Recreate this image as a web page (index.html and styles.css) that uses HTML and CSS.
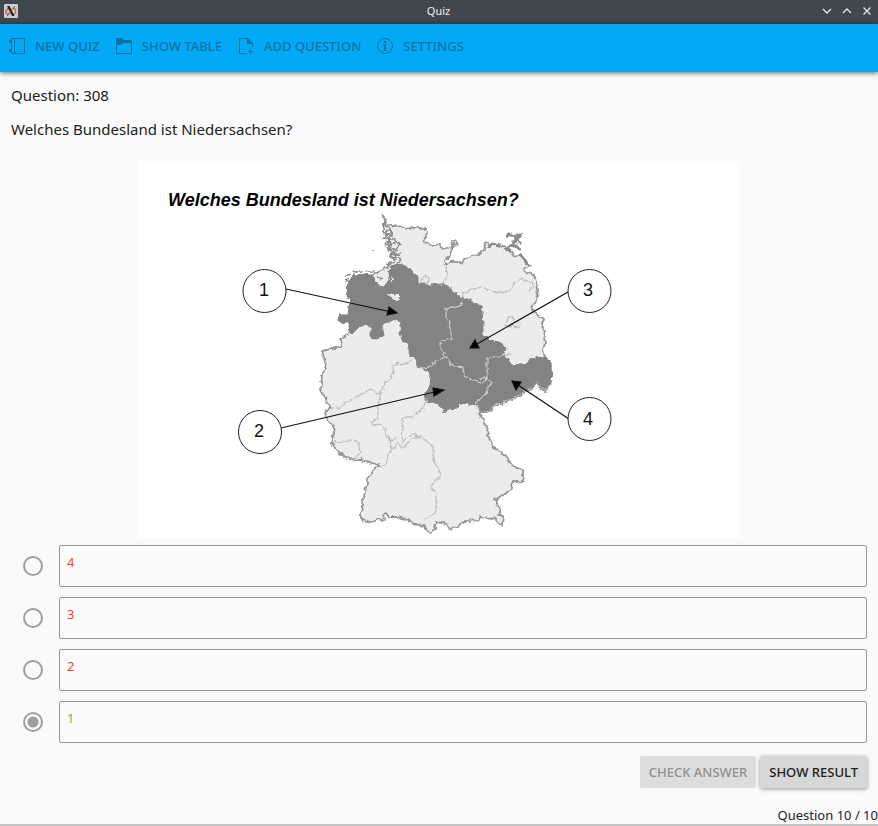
FILE: index.html
```html
<!DOCTYPE html>
<html lang="en">
<head>
<meta charset="utf-8">
<title>Quiz</title>
<link rel="stylesheet" href="styles.css">
</head>
<body>
<header class="titlebar">
  <svg class="app-icon" viewBox="0 0 14 14" aria-hidden="true">
    <rect width="14" height="14" rx="1" fill="#c5cdd0"/>
    <path d="M5 4C1 6 1 11 5 10M9 4q4 1 2 5l-2 2" fill="none" stroke="#e9642d" stroke-width="1.5"/>
    <path d="M3 2h2.500l5 10H8z" fill="#222"/>
    <path d="M11 2L3 12" stroke="#444" stroke-width=".8"/>
  </svg>
  <h1 class="window-title">Quiz</h1>
  <div class="window-controls">
    <button type="button" aria-label="Minimize"><svg viewBox="0 0 10 10"><path d="M1 3l4 4 4-4"/></svg></button>
    <button type="button" aria-label="Maximize"><svg viewBox="0 0 10 10"><path d="M1 7l4-4 4 4"/></svg></button>
    <button type="button" aria-label="Close"><svg viewBox="0 0 10 10"><path d="M1.500 1.500l7 7M8.500 1.500l-7 7"/></svg></button>
  </div>
</header>
<nav class="toolbar">
  <button type="button" class="tool"><svg viewBox="0 0 16 16"><path d="M2.500 .5h13v15h-13zM5.500 .5v15"/><path class="solid" d="M0 2h2v3H0zM0 11h2v3H0z"/></svg>New Quiz</button>
  <button type="button" class="tool"><svg viewBox="0 0 16 16"><path d="M.5 .5v15h15v-13"/><path class="solid" d="M0 0h6l2 2h8v3H7L5 7H0z"/></svg>Show Table</button>
  <button type="button" class="tool"><svg viewBox="0 0 16 16"><path d="M14.500 9V5L10 .5H1.500v15H9M12.500 11v5M10 13.500h5"/><path class="solid" d="M9 0l6 6H9z"/></svg>Add Question</button>
  <button type="button" class="tool"><svg viewBox="0 0 16 16"><circle cx="8" cy="8" r="7.500"/><path class="solid" d="M7 3h2v2H7zM6 6h3v6h1v1H6v-1h1V7H6z"/></svg>Settings</button>
</nav>
<main class="content">
  <p class="line">Question: 308</p>
  <p class="line">Welches Bundesland ist Niedersachsen?</p>
  <svg class="map" viewBox="137 161 602 377" role="img" aria-label="Welches Bundesland ist Niedersachsen?">
    <filter id="rugged" color-interpolation-filters="sRGB">
      <feTurbulence type="fractalNoise" baseFrequency=".22" numOctaves="2" seed="4"/>
      <feDisplacementMap in="SourceGraphic" scale="5" xChannelSelector="R" yChannelSelector="G"/>
    </filter>
    <rect x="137" y="161" width="602" height="377" fill="#fff"/>
    <text class="map-title" x="167" y="206">Welches Bundesland ist Niedersachsen?</text>
    <g filter="url(#rugged)">
    <path class="country" d="M384 220l-1 3 2 3 5-1 8 1 7 3 9-1 6-1 6 4-1 6-3 5 6 1 3 4 6-3 5 5 7-2 3-3-1-4h3l3 4-5 1-2 2 1 5-3 5-4 3v4l6-2 7-1 4 3 2-5 7-3 7-1 3-3 3-2 1-6 3-1 2 2 8 0 6 1 6 3 3 6 7 1 6 6 3 4-5 3 3 4 7 2 2 7 1 8 1 7-4 7-3 6 5 2 2 4 5 2-1 7 3 5-1 5 1 8-2 7 2 7 4 4 3 8-1 11-4 9-2 2-6-4-2-6-5 8-8 4-8 5-7 2-7 4-8 2-5 5-5 2-4-4v6l4 5 3 7 2 7-2 1 3 5 4 8 7 4 6 6 5 7 6 3 5 3v11l-10-1-3 10-9 5-6 4 3 5 3 6-2 3 4 4-1 7-4-2-3-6-6 2-8-2-2 3-13 1-7 5-9 3-3-5-11-2-1 7-6 4-5-7-10-2-6-4-10-3h-9l-3-4-3 2 1 5-7-1-1 2-10 1-5-4v-6l2-12 3-12 2-10 7-10 4-3-10-3-9-2-11-1-7-4-6-6-4-6 1-9 2-4-3-5-6-8-1-5 6-5-4-5-2-5-5-7 2-6-2-3 4-10 2-6-4-14 9-2 9-2 3-4-3-4 9-6 8-50 30-16 8-8-5-3 2-4-6-5 5-3-3-5 4-4-2-6-5-3 2-5-5-5z"/>
    <path class="state" d="M344 281l6-2 2-4 12-1 8 2 2 6 4 3v2l5 1 3-4 2-4v-10l4-5h12l7 6 6 6v6l12 2 11-1 8 2 4 6 7 5 8 2 6 4 7 3 1 6 1 12v11l8 5 11 3 4 6-3 6 5 4 4 7 15-2 2-5 14-2 6 2 3 8-1 12-4 8-2 2-6-4-2-6-5 8-8 4-8 5-7 2-7 4-8 2-5 5-5 2-7-5-8-2-10-1-2 5-8 1-5 3-2-5-6-4-11-2v-7l5-7 1-13-4-4-8-2-4-10-5-2-2-12-6-4-2-8 1-10-7-2-6 2-4 1-2 5 1 9-8 2-4-2v-9l-5-4-8 4-6 6-5-3 2-9-6 2-5-4 1-5 9 0 2-15-3-5 1-15z"/>
    <path class="city" d="M386 293l6 1 7 1v5l-7 0-2-4-4-1zM377 278l4-1 1 8-4 0zM390 276l2 3-2 4z"/>
    <path class="coast" d="M344 276l6-2m2-2l9-1m4 0l8 0m3 2h2m-2 4l5 2M384 264l5 1 1 3M383 220l-1 12 5 2-4 4 6 1-5 5 7 1-4 4 8 1-4 4 7 0-5 3 7 2-3 5 5 4M385 231h5v4h-5zM388 239h6v5h-6zM391 254v5M395 242l5 2-5 4M371 251h1"/>
    <path class="coast thick" d="M487 248l3-4 9 1m6-7l3-4 5 2 1 5-5 5 7 0 3 4m-15-1l7 2m7 4l5 3 3 6M507 236l12-1-3 5 5 4"/>
    <g class="border">
      <path d="M418 284l3-5 3-4 5 5-4 3 5 3M446 264l-1 6 2 6-4 6-3 4M460 298l3-5 5-3 9-2 4-1 5 3 9 2 14-1 5-9 6-4 6 3 5 1 2 6-5 3"/>
      <path d="M505 325l2-8 5 0 1 4 7 3-2 4-6-2-4 1zM508 327l5-5"/>
      <path class="light" d="M462 300l-1 5-16 3v9l4 5-1 6 3 5-1 6-9 1-2 4 2 7 4 5 5 9 12 3 1 7 5 3 14 5 4-4v-21l24-4M478 379l7-1 6 5-4 4-3 9-7 4-3 7 5 3M445 357l-10 4-7 6-10 2"/>
      <path d="M411 361l-11 4-2-2-6 2-1 5 2 4-9 10-5 8-4 3-4-7-8 5-8 4-10 5-6 5-9 1M380 393l-2 8-1 10 0 7-6 4 1 3 7-1 5 4 1 10 4 3 1 6 3 2 4-6 4 5 7-6 4-4 8-2 7 6 5 4v15l6 7 1 8-5 5-4 5 2 5 3 2v17l-4 6-8 3M334 442h10l4-2 9 1 2 11-3 6M389 440l1 10-3 5-2 10-5 1M426 399l-3 8-10 9-12 2 1 9-1 15 5-4 6-4 7 4M384 434l4 4 3 3 4-3"/>
    </g>
    </g>
    <g class="arrow">
      <path d="M285 289L395 313M280 428L442 390M567 292L469 348M568 419L511 381"/>
      <path class="tip" d="M396 313l-10 2 2-8zM443 390l-10 6-1-8zM469 348l5-8 4 8zM511 381l9 1-5 8z"/>
    </g>
    <g class="marker">
      <circle cx="263.500" cy="291" r="21.500"/><circle cx="259" cy="432" r="21.500"/><circle cx="588.500" cy="291" r="21.500"/><circle cx="588.500" cy="419" r="21.500"/>
      <text x="263" y="296">1</text><text x="258" y="437">2</text><text x="587" y="296">3</text><text x="587" y="425">4</text>
    </g>
  </svg>
  <form class="answers">
    <div class="answer"><input type="radio" name="answer" id="a1" aria-labelledby="t1"><textarea class="wrong" id="t1" rows="1" readonly aria-label="Answer 4">4</textarea></div>
    <div class="answer"><input type="radio" name="answer" id="a2" aria-labelledby="t2"><textarea class="wrong" id="t2" rows="1" readonly aria-label="Answer 3">3</textarea></div>
    <div class="answer"><input type="radio" name="answer" id="a3" aria-labelledby="t3"><textarea class="wrong" id="t3" rows="1" readonly aria-label="Answer 2">2</textarea></div>
    <div class="answer"><input type="radio" name="answer" id="a4" aria-labelledby="t4" checked><textarea class="right" id="t4" rows="1" readonly aria-label="Answer 1">1</textarea></div>
    <div class="actions">
      <button type="button" class="action" disabled>Check Answer</button>
      <button type="button" class="action">Show Result</button>
    </div>
  </form>
</main>
<footer class="status">Question 10 / 10</footer>
</body>
</html>
```
FILE: styles.css
```css
* { box-sizing: border-box; }
body {
  margin: 0;
  min-height: 100vh;
  display: flex;
  flex-direction: column;
  background: #fafafa;
  border-bottom: 2px solid #c4c4c4;
  color: #212121;
  font: 15px/20px "Noto Sans", sans-serif;
}
button { font: inherit; border: 0; cursor: pointer; }
.titlebar {
  display: grid;
  grid-template-columns: 1fr auto 1fr;
  align-items: center;
  height: 24px;
  padding: 0 5px 2px 4px;
  background: #40474f;
  color: #eff0f1;
}
.app-icon { width: 14px; height: 14px; }
.window-title { margin: 0; font-size: 11px; font-weight: 400; line-height: 20px; }
.window-controls { display: flex; justify-content: flex-end; gap: 8px; }
.window-controls button { display: flex; padding: 1px; background: none; }
.window-controls svg { width: 10px; height: 10px; fill: none; stroke: #e4e6e8; stroke-width: 1.3; }
.toolbar {
  display: flex;
  align-items: center;
  gap: 16px;
  height: 48px;
  padding: 0 9px 4px;
  background: #03a9f4;
  box-shadow: 0 1px 5px rgba(0, 0, 0, .6);
}
.tool {
  display: flex;
  align-items: center;
  gap: 10px;
  padding: 0;
  background: none;
  color: #0273a6;
  font-size: 13px;
  font-weight: 500;
  text-transform: uppercase;
}
.tool svg { width: 16px; height: 16px; fill: none; stroke: currentColor; }
.tool .solid { fill: currentColor; stroke: none; }
.content { display: flex; flex-direction: column; padding: 13px 11px 0; }
.line { margin: 0 0 14px; }
.map { display: block; width: 100%; max-width: 602px; margin: 8px auto 7px; }
.map-title { font: italic bold 18px "Liberation Sans", sans-serif; fill: #000; }
.country { fill: #eeebee; stroke: #969696; stroke-width: 1.8; stroke-linejoin: round; }
.state { fill: #848284; stroke: #848284; stroke-linejoin: round; }
.city { fill: #eeebee; }
.coast { fill: none; stroke: #8b898b; stroke-width: 1.5; }
.thick { stroke-width: 3; }
.border { fill: none; stroke: #c0c0c0; stroke-width: 1.3; }
.border .light { stroke: #c9c9c9; }
.arrow { fill: none; stroke: #111; stroke-width: 1.2; }
.tip { fill: #000; }
.marker circle { fill: #fff; stroke: #222; }
.marker text { fill: #111; font: 18px "Liberation Sans", sans-serif; text-anchor: middle; }
.answers { display: flex; flex-direction: column; gap: 10px; }
.answer { display: flex; align-items: center; gap: 16px; padding-left: 12px; }
.answer input {
  appearance: none;
  width: 20px;
  height: 20px;
  margin: 0;
  border: 2px solid #9e9e9e;
  border-radius: 50%;
}
.answer input:checked { background: radial-gradient(circle, #9e9e9e 5px, transparent 6px); }
.answer textarea {
  flex: 1;
  min-width: 0;
  height: 42px;
  padding: 6px 7px;
  border: 1px solid #999;
  border-radius: 2px;
  background: none;
  font: 13px/20px "Noto Sans", sans-serif;
  resize: none;
}
.answer .wrong { color: #f44336; }
.answer .right { color: #8aae2c; }
.actions { display: flex; justify-content: flex-end; gap: 4px; padding-top: 3px; }
.action {
  height: 32px;
  padding: 0 9px;
  border-radius: 2px;
  background: #d6d7d7;
  color: #212121;
  font-size: 13px;
  font-weight: 500;
  text-transform: uppercase;
  box-shadow: 0 1px 4px rgba(0, 0, 0, .4);
}
.action:disabled { background: #dddddd; color: #909090; box-shadow: none; }
.status { margin-top: auto; text-align: right; font-size: 13px; line-height: 18px; }
```
